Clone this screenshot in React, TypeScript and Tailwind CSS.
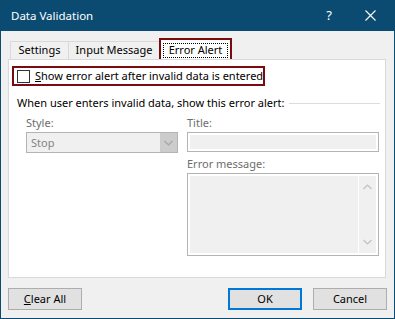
import React from "react";

const FONT = { fontFamily: '"Noto Sans", "Open Sans", sans-serif' };

function Chevron({ up = false, color = "#a6a6a6" }: { up?: boolean; color?: string }) {
  return (
    <svg width="9" height="6" viewBox="0 0 9 6">
      <path d={up ? "M0.5 5 L4.5 1 L8.5 5" : "M0.5 1 L4.5 5 L8.5 1"} fill="none" stroke={color} strokeWidth="1.2" />
    </svg>
  );
}

function Button({ children, primary = false }: { children: React.ReactNode; primary?: boolean }) {
  return (
    <div
      className={`flex h-[22px] w-[74px] items-center justify-center bg-[#e1e1e1] text-[11px] text-black ${
        primary ? "border-2 border-[#0078d7]" : "border border-[#adadad]"
      }`}
    >
      {children}
    </div>
  );
}

export default function App() {
  return (
    <div className="flex h-[319px] w-[395px] flex-col border-x border-b border-[#0b4b72] bg-[#f0f0f0]" style={FONT}>
      {/* title bar */}
      <div className="-mx-px flex h-[31px] shrink-0 items-center bg-[#0b4b72] pl-[11px] text-[11.5px] text-white">
        <span className="flex-1">Data Validation</span>
        <span className="mr-[33px] text-[13px]">?</span>
        <svg width="11" height="11" viewBox="0 0 11 11" className="mr-[19px]">
          <path d="M0.5 0.5 L10.5 10.5 M10.5 0.5 L0.5 10.5" stroke="#fff" strokeWidth="1.1" />
        </svg>
      </div>

      <div className="flex flex-1 flex-col px-[7px] pt-[7px]">
        {/* tabs */}
        <div className="flex h-[21px] items-end pl-[2px] text-[11px] text-black">
          <div className="flex h-[18px] w-[58px] items-center justify-center border-l border-t border-[#d9d9d9]">Settings</div>
          <div className="flex h-[18px] w-[92px] items-center justify-center border-x border-t border-[#d9d9d9]">Input Message</div>
          <div className="-ml-[1px] flex h-[21px] w-[73px] items-center justify-center border-2 border-b-0 border-[#7a0c10] bg-white px-[2px] pt-[2px]">
            <div className="flex h-[15px] w-full items-center justify-center border border-dotted border-black">Error Alert</div>
          </div>
        </div>

        {/* panel */}
        <div className="flex h-[219px] w-[378px] flex-col border border-[#d9d9d9] bg-white pl-[3px] text-[11px]">
          <div className="mt-[6px] flex h-[20px] w-[253px] items-center border-2 border-[#7a0c10] pl-[3px]">
            <div className="h-[13px] w-[13px] shrink-0 border border-[#333]" />
            <span className="ml-[5px] whitespace-nowrap text-black">
              <span className="underline">S</span>how error alert after invalid data is entered
            </span>
          </div>

          <div className="mt-[8px] flex h-[18px] items-center pl-[5px] pr-[5px]">
            <span className="whitespace-nowrap text-black">When user enters invalid data, show this error alert:</span>
            <div className="ml-[4px] h-px flex-1 bg-[#dcdcdc]" />
          </div>

          <div className="mt-[2px] flex pl-[14px]">
            <div className="flex w-[152px] flex-col">
              <span className="h-[18px] leading-[18px] text-[#6d6d6d]">Style:</span>
              <div className="flex h-[21px] items-stretch border border-[#b4b4b4] bg-[#f0f0f0]">
                <span className="flex-1 pl-[4px] leading-[19px] text-[#838383]">Stop</span>
                <div className="flex w-[17px] items-center justify-center bg-[#cccccc]">
                  <Chevron />
                </div>
              </div>
            </div>
            <div className="ml-[9px] flex w-[192px] flex-col">
              <span className="h-[18px] leading-[18px] text-[#6d6d6d]">Title:</span>
              <div className="h-[20px] border border-[#b4b4b4] bg-white p-[2px]">
                <div className="h-full w-full bg-[#f0f0f0]" />
              </div>
              <span className="mt-[3px] h-[18px] leading-[18px] text-[#6d6d6d]">Error message:</span>
              <div className="flex h-[83px] border border-[#b4b4b4] bg-white p-[2px]">
                <div className="flex-1 bg-[#f0f0f0]" />
                <div className="ml-px flex w-[17px] flex-col items-center justify-between bg-[#f0f0f0] py-[8px]">
                  <Chevron up color="#c2c2c2" />
                  <Chevron color="#c2c2c2" />
                </div>
              </div>
            </div>
          </div>
        </div>

        {/* buttons */}
        <div className="mt-[10px] flex">
          <Button>
            <span className="underline">C</span>lear All
          </Button>
          <div className="flex-1" />
          <Button primary>OK</Button>
          <div className="w-[11px]" />
          <Button>Cancel</Button>
        </div>
      </div>
    </div>
  );
}
